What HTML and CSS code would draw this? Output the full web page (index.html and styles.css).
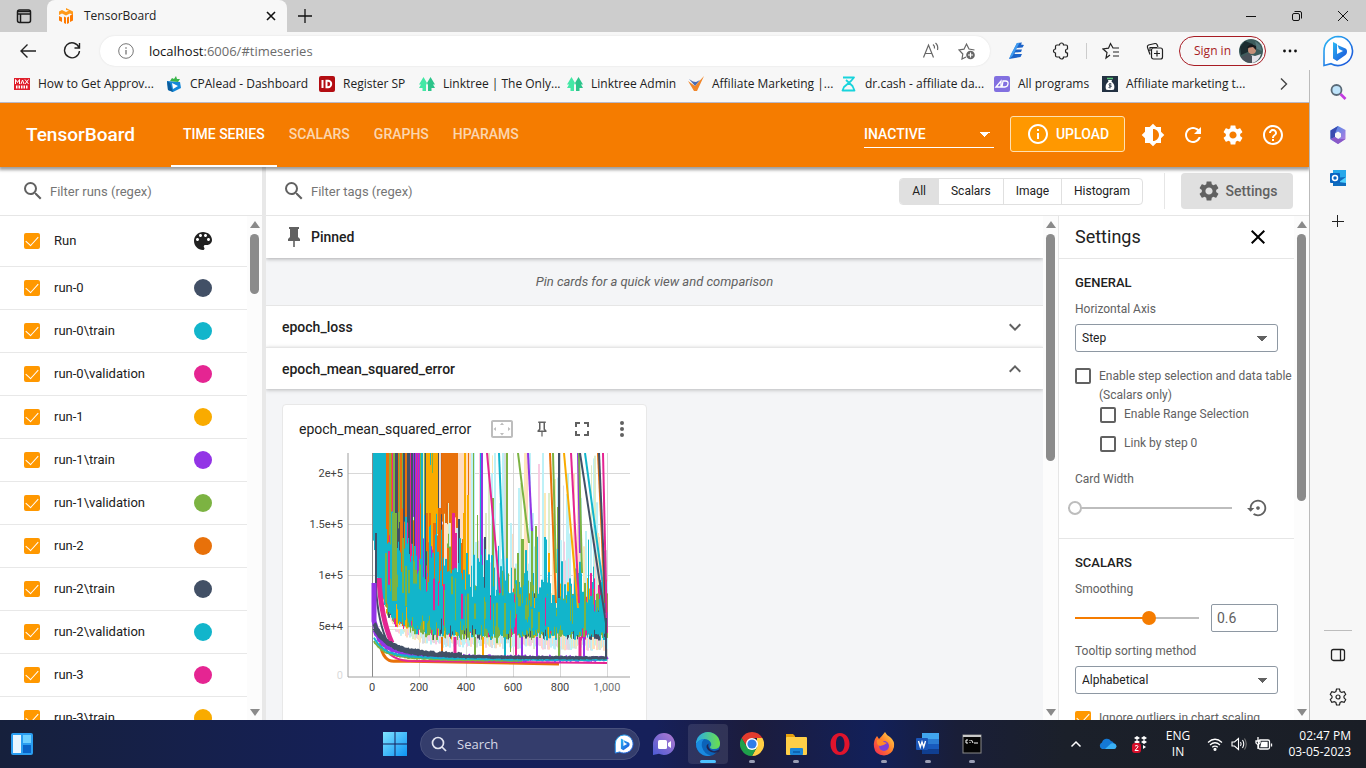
FILE: index.html
```html
<!DOCTYPE html>
<html lang="en">
<head>
<meta charset="utf-8">
<title>TensorBoard</title>
<link rel="stylesheet" href="styles.css">
</head>
<body>
<svg class="defs" aria-hidden="true">
  <defs>
    <linearGradient id="g-bing" x1="0" y1="0" x2="1" y2="1"><stop offset="0" stop-color="#2bb8f5"/><stop offset="1" stop-color="#1b4fd8"/></linearGradient>
    <linearGradient id="g-win" x1="0" y1="0" x2="1" y2="1"><stop offset="0" stop-color="#7fe3ff"/><stop offset="1" stop-color="#0c93f5"/></linearGradient>
    <linearGradient id="g-chat" x1="0" y1="1" x2="1" y2="0"><stop offset="0" stop-color="#4c5bd4"/><stop offset="1" stop-color="#b37ad0"/></linearGradient>
    <linearGradient id="g-edge" x1="0" y1="0" x2="1" y2="0"><stop offset="0" stop-color="#2aa9e8"/><stop offset="1" stop-color="#6be04a"/></linearGradient>
    <linearGradient id="g-fox" x1="1" y1="0" x2="0" y2="1"><stop offset="0" stop-color="#ffe14d"/><stop offset=".5" stop-color="#ff7a2a"/><stop offset="1" stop-color="#f0205a"/></linearGradient>
    <linearGradient id="g-365" x1="0" y1="0" x2="1" y2="1"><stop offset="0" stop-color="#3a8fe8"/><stop offset="1" stop-color="#c07ae0"/></linearGradient>
    <symbol id="i-search" viewBox="0 0 24 24"><path d="M15.5 14h-.79l-.28-.27A6.471 6.471 0 0016 9.5 6.5 6.5 0 109.5 16c1.61 0 3.09-.59 4.23-1.57l.27.28v.79l5 4.99L20.49 19l-4.99-5zm-6 0C7.01 14 5 11.99 5 9.5S7.01 5 9.5 5 14 7.01 14 9.5 11.99 14 9.5 14z"/></symbol>
    <symbol id="i-gear" viewBox="0 0 24 24"><path d="M19.14 12.94c.04-.3.06-.61.06-.94 0-.32-.02-.64-.07-.94l2.03-1.58c.18-.14.23-.41.12-.61l-1.92-3.32c-.12-.22-.37-.29-.59-.22l-2.39.96c-.5-.38-1.03-.7-1.62-.94l-.36-2.54c-.04-.24-.24-.41-.48-.41h-3.84c-.24 0-.43.17-.47.41l-.36 2.54c-.59.24-1.13.57-1.62.94l-2.39-.96c-.22-.08-.47 0-.59.22L2.74 8.87c-.12.21-.08.47.12.61l2.03 1.58c-.05.3-.09.63-.09.94s.02.64.07.94l-2.03 1.58c-.18.14-.23.41-.12.61l1.92 3.32c.12.22.37.29.59.22l2.39-.96c.5.38 1.03.7 1.62.94l.36 2.54c.05.24.24.41.48.41h3.84c.24 0 .44-.17.47-.41l.36-2.54c.59-.24 1.13-.56 1.62-.94l2.39.96c.22.08.47 0 .59-.22l1.92-3.32c.12-.22.07-.47-.12-.61l-2.01-1.58zM12 15.6c-1.98 0-3.6-1.62-3.6-3.6s1.62-3.6 3.6-3.6 3.6 1.62 3.6 3.6-1.62 3.6-3.6 3.6z"/></symbol>
    <symbol id="i-pin" viewBox="0 0 24 24"><path d="M16 12V4h1V2H7v2h1v8l-2 2v2h5.2v6h1.6v-6H18v-2z"/></symbol>
    <symbol id="i-close" viewBox="0 0 24 24"><path d="M19 6.41L17.59 5 12 10.59 6.41 5 5 6.41 10.59 12 5 17.59 6.41 19 12 13.41 17.59 19 19 17.59 13.41 12z"/></symbol>
    <symbol id="i-tree" viewBox="0 0 16 16"><path fill="#43e8a5" d="M4.500 1L0 8.500h2L0 12h3.500v3H7V9l1-2z"/><path fill="#2cc48a" d="M11.500 1L16 8.500h-2l2 3.500h-3.500v3H9V9L8 7z"/></symbol>
    <symbol id="i-bing" viewBox="0 0 32 32"><path d="M16 1.5A14.5 14.5 0 1 1 9 28.7L2 30.5V16A14.5 14.5 0 0 1 16 1.5z" fill="#fff" stroke="url(#g-bing)" stroke-width="1.6"/><path d="M11 7l4 2v10l6-3-4-2-1.5-4 8 3.500c2 1 2 5 0 6.500L15 26l-4-2.500z" fill="url(#g-bing)"/></symbol>
  </defs>
</svg>

<header class="tabstrip">
  <button class="tab-actions" aria-label="Tab actions"><svg width="16" height="16" viewBox="0 0 16 16" fill="none" stroke="#1b1b1b" stroke-width="1.500"><rect x="1.500" y="2" width="13" height="12.500" rx="2"/><path d="M1.500 3.500h13M4.500 6.500v8M1.500 6h13"/></svg></button>
  <div class="tab">
    <svg width="16" height="16" viewBox="0 0 16 16"><path fill="#ff9a1a" d="M8 0l7 3.500V7l-3-1.500L8 7.500 4 5.500 1 7V3.500L4 2l4 2 3-1.500L8 2z"/><path fill="#ff7a00" d="M1 8l3 1.500V14l-3-1.500zM6 8.500l2 1V16l-2-1zM9 9.500l2-1V15l-2 1zM12 7.500L15 6v6.500L12 14z"/></svg>
    <span class="tab-title">TensorBoard</span>
    <button class="tab-close" aria-label="Close tab"><svg width="12" height="12" viewBox="0 0 12 12" stroke="#111" stroke-width="1.600"><path d="M2 2l8 8M10 2l-8 8"/></svg></button>
  </div>
  <button class="new-tab" aria-label="New tab"><svg width="16" height="16" viewBox="0 0 16 16" stroke="#111" stroke-width="1.300"><path d="M8 1v14M1 8h14"/></svg></button>
  <div class="window-buttons">
    <button aria-label="Minimize"><svg width="12" height="12" viewBox="0 0 12 12" stroke="#111"><path d="M1 6.500h10"/></svg></button>
    <button aria-label="Restore"><svg width="12" height="12" viewBox="0 0 12 12" stroke="#111" fill="none"><rect x="1.500" y="3.500" width="7" height="7" rx="1.500"/><path d="M3.500 1.500H9a1.500 1.500 0 0 1 1.500 1.500v5.500"/></svg></button>
    <button aria-label="Close"><svg width="12" height="12" viewBox="0 0 12 12" stroke="#111"><path d="M1 1l10 10M11 1L1 11"/></svg></button>
  </div>
</header>

<div class="toolbar">
  <button class="nav-btn" aria-label="Back"><svg width="18" height="18" viewBox="0 0 18 18" fill="none" stroke="#222" stroke-width="1.400"><path d="M17 9H2M8.500 2.500L2 9l6.500 6.500"/></svg></button>
  <button class="nav-btn" aria-label="Refresh"><svg width="18" height="18" viewBox="0 0 18 18" fill="none" stroke="#222" stroke-width="1.400"><path d="M16 5.500A7.500 7.500 0 1 0 16.500 9M16.500 1v5h-5"/></svg></button>
  <div class="address">
    <svg width="16" height="16" viewBox="0 0 16 16" fill="none" stroke="#767676"><circle cx="8" cy="8" r="7.300"/><path d="M8 7v4.500M8 4.300v1.400" stroke-width="1.300"/></svg>
    <a class="url" href="#timeseries">localhost<span>:6006/#timeseries</span></a>
    <button aria-label="Read aloud"><svg width="18" height="18" viewBox="0 0 18 18" fill="none" stroke="#666" stroke-width="1.200"><path d="M1.500 15.500L6.500 3l5 12.500M3.300 11.500h6.400M11 2.500q2 1.500 1.500 4M13.500 1q3 2.500 2 7"/></svg></button>
    <button aria-label="Add to favorites"><svg width="18" height="18" viewBox="0 0 18 18" fill="none" stroke="#666" stroke-width="1.200"><path d="M8 15l-4 2 .8-5L1 8l5-.8L8.500 2 11 7l5.500 1"/><circle cx="12.500" cy="13" r="4.300" fill="#666" stroke="none"/><path d="M12.500 10.500v5M10 13h5" stroke="#fff"/></svg></button>
  </div>
  <div class="tools">
    <button aria-label="Extension"><svg width="18" height="18" viewBox="0 0 18 18"><path fill="#1c63c8" d="M9 1l5-.500-1 2 3 .500-1.500 2.500-6 .500-.500 1.500h6L13 10l-6 .500-.500 1.500h7.500l-1.500 3L1 17l1.500-3z"/><path fill="#3f9bf0" d="M9 1l2.500 0-7 13-3.500 3 2-5z"/></svg></button>
    <button aria-label="Extensions"><svg width="18" height="18" viewBox="0 0 18 18" fill="none" stroke="#222" stroke-width="1.200"><path d="M5 3h2.500a2 2 0 0 1 4 0H14q1.500 0 1.500 1.500V7a2 2 0 0 0 0 4v2.500q0 1.500-1.500 1.500h-2.500a2 2 0 0 1-4 0H5q-1.500 0-1.500-1.500V11a2 2 0 1 1 0-4V4.500Q3.500 3 5 3z"/></svg></button>
    <span class="tool-sep"></span>
    <button aria-label="Favorites"><svg width="18" height="18" viewBox="0 0 18 18" fill="none" stroke="#222" stroke-width="1.200"><path d="M8 13l-4 3 1-5.500L1 7l5.500-.800L8.500 1.500 11 6h6M11 10h6M11 14h6"/></svg></button>
    <button aria-label="Collections"><svg width="18" height="18" viewBox="0 0 18 18" fill="none" stroke="#222" stroke-width="1.200"><path d="M4 12.500L1.500 5.500a2 2 0 0 1 1-2.500L9 1.500a2 2 0 0 1 2 1L12 5M4 9V5.500h7"/><rect x="5.500" y="6" width="11" height="11" rx="2"/><path d="M11 8.500v6M8 11.500h6"/></svg></button>
    <button class="signin">Sign in
      <svg width="24" height="24" viewBox="0 0 24 24"><circle cx="12" cy="12" r="12" fill="#3d5c5c"/><path d="M1 8l5-6 5 2 3 1-3 7-9 4z" fill="#1b2c30"/><path d="M16 2l5 4 2 6-5-2z" fill="#56787c"/><circle cx="13" cy="11" r="4" fill="#c58f78"/><path d="M8 9q3-6 9-2l0 4-3-3z" fill="#17181c"/><path d="M12 16l4 1 6-2a12 12 0 0 1-9 9z" fill="#e6e3ea"/><path d="M2 18l8-4 3 3 0 7A12 12 0 0 1 2 18z" fill="#4a525a"/></svg>
    </button>
    <button aria-label="More"><svg width="18" height="18" viewBox="0 0 18 18" fill="#111"><circle cx="3.500" cy="9" r="1.400"/><circle cx="9" cy="9" r="1.400"/><circle cx="14.500" cy="9" r="1.400"/></svg></button>
  </div>
  <button class="bing" aria-label="Bing chat"><svg width="32" height="32"><use href="#i-bing"/></svg></button>
</div>

<div class="browser">
  <div class="page-column">
    <nav class="bookmarks" aria-label="Bookmarks">
      <a href="#"><svg width="16" height="16" viewBox="0 0 16 16"><rect y="2" width="16" height="12" fill="#e0202c"/><path d="M1.500 8V3.500l2 3 2-3V8M7 8l1.500-4L10 8M11 3.500L14.500 8M14.500 3.500L11 8" fill="none" stroke="#fff"/><path d="M2 11h12" stroke="#fff" stroke-width="3" stroke-dasharray="1.500 1"/></svg>How to Get Approv...</a>
      <a href="#"><svg width="16" height="16" viewBox="0 0 16 16"><path fill="#1488d8" d="M1 5l13 1 1 6-8 4-5-2z"/><path fill="#fff" d="M6 7l6 3-5 3z"/><path fill="#3ab54a" d="M4 5l2-3 2 1 2-3 1 3 3 0-2 3z"/><path fill="#0a5c9c" d="M1 5l3 2 3 9-5-2z"/></svg>CPAlead - Dashboard</a>
      <a href="#"><svg width="16" height="16" viewBox="0 0 16 16"><rect width="16" height="16" rx="2" fill="#b30d12"/><path d="M3.500 4v8M7.500 4.800H9a3.200 3.200 0 0 1 0 6.400H7.500z" fill="none" stroke="#fff" stroke-width="2"/></svg>Register SP</a>
      <a href="#"><svg width="16" height="16"><use href="#i-tree"/></svg>Linktree | The Only...</a>
      <a href="#"><svg width="16" height="16"><use href="#i-tree"/></svg>Linktree Admin</a>
      <a href="#"><svg width="16" height="16" viewBox="0 0 16 16"><path fill="#f0862a" d="M0 5l7 5 9-10-7 15H6z"/><path fill="#4b6cb4" d="M1 3l4 2.500L8 6l4-2-5 6z"/></svg>Affiliate Marketing |...</a>
      <a href="#"><svg width="16" height="16" viewBox="0 0 16 16" fill="none" stroke="#18d4dc" stroke-width="1.800" stroke-linejoin="round"><path d="M2 1.500h11L10 5l-7 6-1.500 3.500h12L11.500 10 5 4"/></svg>dr.cash - affiliate da...</a>
      <a href="#"><svg width="16" height="16" viewBox="0 0 16 16"><rect width="16" height="16" rx="2" fill="#8270e0"/><path d="M2 11l5-6v6zM9 5h2.500q3 0 2.500 3t-3 3H8z" fill="none" stroke="#fff" stroke-width="1.300"/></svg>All programs</a>
      <a href="#"><svg width="16" height="16" viewBox="0 0 16 16"><rect width="16" height="16" fill="#233142"/><path fill="#fff" d="M6 4h4L9.500 5.500q4 3 2.500 8-4 1-8 0-1.500-5 2.500-8z"/><path d="M5 2.500h6" stroke="#5ac878" stroke-width="1.500"/><path d="M9.500 8Q7 7 7 8.500t2 1.500-2.500 1.500M8 7v5.500" fill="none" stroke="#233142" stroke-width=".8"/></svg>Affiliate marketing t...</a>
      <button aria-label="More bookmarks"><svg width="12" height="14" viewBox="0 0 12 14" fill="none" stroke="#444" stroke-width="1.400"><path d="M3 1.500L8.500 7 3 12.500"/></svg></button>
    </nav>

    <div class="app">
      <header class="app-bar">
        <h1>TensorBoard</h1>
        <nav class="app-tabs">
          <a class="active" href="#timeseries">TIME SERIES</a>
          <a href="#scalars">SCALARS</a>
          <a href="#graphs">GRAPHS</a>
          <a href="#hparams">HPARAMS</a>
        </nav>
        <div class="app-actions">
          <select class="inactive" aria-label="Inactive dashboards"><option>INACTIVE</option></select>
          <button class="upload"><svg width="24" height="24" viewBox="0 0 24 24"><path d="M11 17h2v-6h-2v6zm1-15C6.480 2 2 6.480 2 12s4.480 10 10 10 10-4.480 10-10S17.520 2 12 2zm0 18c-4.410 0-8-3.590-8-8s3.590-8 8-8 8 3.590 8 8-3.590 8-8 8zM11 9h2V7h-2v2z"/></svg>UPLOAD</button>
          <button class="bar-icon" aria-label="Theme"><svg width="24" height="24" viewBox="0 0 24 24"><path d="M20 15.310L23.310 12 20 8.690V4h-4.690L12 .69 8.690 4H4v4.690L.69 12 4 15.310V20h4.690L12 23.310 15.310 20H20v-4.690zM12 18V6c3.310 0 6 2.690 6 6s-2.690 6-6 6z"/></svg></button>
          <button class="bar-icon" aria-label="Reload"><svg width="24" height="24" viewBox="0 0 24 24"><path d="M17.650 6.350C16.200 4.900 14.210 4 12 4c-4.420 0-7.990 3.580-7.990 8s3.570 8 7.990 8c3.730 0 6.840-2.550 7.730-6h-2.080c-.82 2.330-3.040 4-5.650 4-3.310 0-6-2.690-6-6s2.690-6 6-6c1.660 0 3.140.69 4.220 1.780L13 11h7V4l-2.350 2.350z"/></svg></button>
          <button class="bar-icon" aria-label="Settings"><svg width="24" height="24"><use href="#i-gear"/></svg></button>
          <button class="bar-icon" aria-label="Help"><svg width="24" height="24" viewBox="0 0 24 24"><path d="M11 18h2v-2h-2v2zm1-16C6.480 2 2 6.480 2 12s4.480 10 10 10 10-4.480 10-10S17.520 2 12 2zm0 18c-4.410 0-8-3.590-8-8s3.590-8 8-8 8 3.590 8 8-3.590 8-8 8zm0-14c-2.210 0-4 1.790-4 4h2c0-1.100.9-2 2-2s2 .9 2 2c0 2-3 1.750-3 5h2c0-2.250 3-2.500 3-5 0-2.210-1.790-4-4-4z"/></svg></button>
        </div>
      </header>

      <div class="app-body">
        <aside class="runs">
          <label class="filter"><svg width="24" height="24"><use href="#i-search"/></svg><input type="text" placeholder="Filter runs (regex)"></label>
          <div class="scroller">
            <ul class="run-list">
              <li class="run-head"><label><input type="checkbox" checked>Run</label><button aria-label="Color runs"><svg width="24" height="24" viewBox="0 0 24 24" fill="#212121"><path d="M12 3c-4.970 0-9 4.030-9 9s4.030 9 9 9c.83 0 1.500-.67 1.500-1.500 0-.39-.15-.74-.39-1.010-.23-.26-.38-.61-.38-.99 0-.83.67-1.500 1.500-1.500H16c2.760 0 5-2.240 5-5 0-4.420-4.030-8-9-8zm-5.500 9c-.83 0-1.500-.67-1.500-1.500S5.670 9 6.500 9 8 9.670 8 10.500 7.330 12 6.500 12zm3-4C8.670 8 8 7.330 8 6.500S8.670 5 9.500 5s1.500.67 1.500 1.500S10.330 8 9.500 8zm5 0c-.83 0-1.500-.67-1.500-1.500S13.670 5 14.500 5s1.500.67 1.500 1.500S15.330 8 14.500 8zm3 4c-.83 0-1.500-.67-1.500-1.500S16.670 9 17.500 9s1.500.67 1.500 1.500-.67 1.500-1.500 1.500z"/></svg></button></li>
              <li><label><input type="checkbox" checked>run-0</label><span class="swatch navy"></span></li>
              <li><label><input type="checkbox" checked>run-0\train</label><span class="swatch teal"></span></li>
              <li><label><input type="checkbox" checked>run-0\validation</label><span class="swatch pink"></span></li>
              <li><label><input type="checkbox" checked>run-1</label><span class="swatch amber"></span></li>
              <li><label><input type="checkbox" checked>run-1\train</label><span class="swatch purple"></span></li>
              <li><label><input type="checkbox" checked>run-1\validation</label><span class="swatch green"></span></li>
              <li><label><input type="checkbox" checked>run-2</label><span class="swatch orange"></span></li>
              <li><label><input type="checkbox" checked>run-2\train</label><span class="swatch navy"></span></li>
              <li><label><input type="checkbox" checked>run-2\validation</label><span class="swatch teal"></span></li>
              <li><label><input type="checkbox" checked>run-3</label><span class="swatch pink"></span></li>
              <li><label><input type="checkbox" checked>run-3\train</label><span class="swatch amber"></span></li>
            </ul>
            <div class="scrollbar"><i class="up"></i><i class="thumb thumb-s"></i><i class="down"></i></div>
          </div>
        </aside>

        <main class="main">
          <div class="main-bar">
            <label class="filter"><svg width="24" height="24"><use href="#i-search"/></svg><input type="text" placeholder="Filter tags (regex)"></label>
            <div class="toggle">
              <button class="on">All</button><button>Scalars</button><button>Image</button><button>Histogram</button>
            </div>
            <span class="bar-sep"></span>
            <button class="settings-btn"><svg width="24" height="24"><use href="#i-gear"/></svg>Settings</button>
          </div>
          <div class="main-split">
            <div class="cards scroller">
              <div class="cards-body">
                <h2 class="pinned"><svg width="24" height="24"><use href="#i-pin"/></svg>Pinned</h2>
                <p class="pinned-empty">Pin cards for a quick view and comparison</p>
                <button class="group">epoch_loss<svg width="24" height="24" viewBox="0 0 24 24"><path d="M16.590 8.590L12 13.170 7.410 8.590 6 10l6 6 6-6z"/></svg></button>
                <button class="group open">epoch_mean_squared_error<svg width="24" height="24" viewBox="0 0 24 24"><path d="M12 8l-6 6 1.410 1.410L12 10.830l4.590 4.580L18 14z"/></svg></button>
                <section class="card">
                  <div class="card-head">
                    <h3>epoch_mean_squared_error</h3>
                    <button aria-label="Fit domain" disabled><svg width="24" height="24" viewBox="0 0 24 24"><path d="M12.010 5.500L10 8h4l-1.990-2.500zM18 10v4l2.500-1.990L18 10zM6 10l-2.500 2.010L6 14v-4zm8 6h-4l2.010 2.500L14 16zm7-13H3c-1.100 0-2 .9-2 2v14c0 1.100.9 2 2 2h18c1.100 0 2-.9 2-2V5c0-1.100-.9-2-2-2zm0 16.010H3V4.990h18v14.020z"/></svg></button>
                    <button aria-label="Pin card"><svg width="18" height="18" viewBox="0 0 24 24"><path d="M16 12V4h1V2H7v2h1v8l-2 2v2h5.200v6h1.600v-6H18v-2zM8.800 14l1.200-1.200V4h4v8.800l1.200 1.200z"/></svg></button>
                    <button aria-label="Full screen"><svg width="24" height="24" viewBox="0 0 24 24"><path d="M7 14H5v5h5v-2H7v-3zm-2-4h2V7h3V5H5v5zm12 7h-3v2h5v-5h-2v3zM14 5v2h3v3h2V5h-5z"/></svg></button>
                    <button aria-label="More options"><svg width="24" height="24" viewBox="0 0 24 24"><circle cx="12" cy="6" r="2"/><circle cx="12" cy="12" r="2"/><circle cx="12" cy="18" r="2"/></svg></button>
                  </div>
                  <svg class="chart" width="363" height="252" viewBox="0 0 363 252" role="img" aria-label="epoch_mean_squared_error by step"></svg>
                </section>
              </div>
              <div class="scrollbar"><i class="up"></i><i class="thumb thumb-m"></i><i class="down"></i></div>
            </div>

            <aside class="settings scroller">
              <div class="settings-body">
                <div class="settings-head"><h2>Settings</h2><button aria-label="Close settings"><svg width="24" height="24"><use href="#i-close"/></svg></button></div>
                <section>
                  <h3>GENERAL</h3>
                  <label class="field" for="axis">Horizontal Axis</label>
                  <select id="axis"><option>Step</option></select>
                  <label class="check check-step"><input type="checkbox"><span>Enable step selection and data table (Scalars only)</span></label>
                  <label class="check check-sub"><input type="checkbox"><span>Enable Range Selection</span></label>
                  <label class="check check-sub check-link"><input type="checkbox"><span>Link by step 0</span></label>
                  <label class="field" for="width">Card Width</label>
                  <div class="slider-row wide"><input id="width" class="hollow" type="range" min="0" max="100" value="0"><button aria-label="Reset width"><svg width="22" height="22" viewBox="0 0 24 24"><path d="M14 12c0-1.100-.9-2-2-2s-2 .9-2 2 .9 2 2 2 2-.9 2-2zm-2-9c-4.970 0-9 4.030-9 9H0l4 4 4-4H5c0-3.870 3.130-7 7-7s7 3.130 7 7-3.130 7-7 7c-1.510 0-2.910-.49-4.060-1.300l-1.420 1.440C8.040 20.300 9.940 21 12 21c4.970 0 9-4.030 9-9s-4.030-9-9-9z"/></svg></button></div>
                </section>
                <section>
                  <h3>SCALARS</h3>
                  <label class="field" for="smooth">Smoothing</label>
                  <div class="slider-row"><input id="smooth" class="filled" type="range" min="0" max="1" step="0.01" value="0.61"><input class="number" type="text" value="0.6" aria-label="Smoothing value"></div>
                  <label class="field" for="sort">Tooltip sorting method</label>
                  <select id="sort"><option>Alphabetical</option></select>
                  <label class="check check-outliers"><input type="checkbox" checked><span>Ignore outliers in chart scaling</span></label>
                </section>
              </div>
              <div class="scrollbar"><i class="up"></i><i class="thumb thumb-l"></i><i class="down"></i></div>
            </aside>
          </div>
        </main>
      </div>
    </div>
  </div>

  <aside class="edge-bar">
    <button aria-label="Search"><svg width="18" height="18" viewBox="0 0 18 18"><circle cx="7.500" cy="7" r="5" fill="#bfe4fb" stroke="#5a6a78" stroke-width="1.800"/><path d="M11.500 11l5 5" stroke="#c23be0" stroke-width="2.600"/></svg></button>
    <button aria-label="Microsoft 365"><svg width="18" height="18" viewBox="0 0 18 18"><path fill="url(#g-365)" fill-rule="evenodd" d="M9 0l7.500 4v9L9 18l-7.500-4.500V4.500zM9 5.500L6 7.500v3.500l3 2 3-2V7.500z"/><path fill="#3a4bb0" d="M1.500 4.500L9 0 6 7.500v3.500L1.500 13z"/><path fill="#8a5ac8" d="M1.500 13L6 11l3 2 7.500 0L9 18z"/></svg></button>
    <button aria-label="Outlook"><svg width="18" height="18" viewBox="0 0 18 18"><rect x="4" y="1" width="13" height="10" fill="#28a8ea"/><path fill="#0f6cbd" d="M4 9l13-1v9H4z"/><path fill="#50d0ff" d="M10 13l7-5v6z"/><rect x="1" y="4" width="10" height="10" rx="1" fill="#0a64c0"/><circle cx="6" cy="9" r="2.500" fill="none" stroke="#fff" stroke-width="1.500"/></svg></button>
    <button aria-label="Add"><svg width="18" height="18" viewBox="0 0 18 18" stroke="#222"><path d="M8.500 3v12M3 9.500h12"/></svg></button>
    <div class="edge-bottom">
      <button aria-label="Sidebar"><svg width="18" height="18" viewBox="0 0 18 18" fill="none" stroke="#222" stroke-width="1.300"><rect x="2.500" y="3.500" width="13" height="11" rx="2"/><path d="M11.500 3.500v11"/></svg></button>
      <button aria-label="Sidebar settings"><svg width="18" height="18" viewBox="0 0 18 18" fill="none" stroke="#222" stroke-width="1.200"><path d="M7.500 1h3l.6 2.500 1.600.9 2.500-.7 1.500 2.600L15 8.200v1.600l1.700 1.900-1.500 2.600-2.500-.7-1.600.9-.6 2.500h-3l-.6-2.500-1.600-.9-2.500.7-1.500-2.600L3 9.800V8.200L1.300 6.300l1.500-2.600 2.500.7 1.600-.9z"/><circle cx="9" cy="9" r="2"/></svg></button>
    </div>
  </aside>
</div>

<footer class="taskbar">
  <button class="widgets" aria-label="Widgets"><svg width="24" height="24" viewBox="0 0 24 24"><rect x="1" y="1" width="22" height="22" rx="2" fill="#2a9df0"/><rect x="3" y="3" width="8" height="18" fill="#e9f6ff"/><rect x="13" y="3" width="8" height="8" fill="#6fd0ff"/><rect x="13" y="13" width="8" height="8" fill="#0a64c8"/></svg></button>
  <div class="apps">
    <button aria-label="Start"><svg width="24" height="24" viewBox="0 0 24 24" fill="url(#g-win)"><path d="M0 0h11.500v11.500H0zM12.500 0H24v11.500H12.500zM0 12.500h11.500V24H0zM12.500 12.500H24V24H12.500z"/></svg></button>
    <label class="task-search"><svg width="16" height="16" viewBox="0 0 16 16" fill="none" stroke="#e2e4f0" stroke-width="1.700"><circle cx="7" cy="7" r="5.500"/><path d="M11 11l4 4"/></svg><input type="text" placeholder="Search"><svg width="20" height="20"><use href="#i-bing"/></svg></label>
    <button aria-label="Chat"><svg width="24" height="24" viewBox="0 0 24 24"><path d="M12 1a11 11 0 1 1-5 20.800L1 23V12A11 11 0 0 1 12 1z" fill="url(#g-chat)"/><rect x="6" y="8" width="9" height="9" rx="1.500" fill="#fff"/><path d="M16 11l3-2v7l-3-2z" fill="#fff"/></svg></button>
    <button class="current" aria-label="Edge"><svg width="24" height="24" viewBox="0 0 24 24"><circle cx="12" cy="12" r="12" fill="#0c63b8"/><path fill="url(#g-edge)" d="M0 12A12 12 0 0 1 24 12q0 5-6 5-4 0-4-2 2-2 1-4-2-4-7-4-5 1-8 5z"/><path fill="#1a8ae0" d="M0 12q3-5 8-5-3 3-2 8 2 7 9 8.600A12 12 0 0 1 0 12z"/><path fill="#1f2554" d="M14 11q-3 1-1 5 3 5 9 2l2 -1-1 3q-7 2-11-2-4-5 2-7z"/></svg></button>
    <button class="open" aria-label="Chrome"><svg width="24" height="24" viewBox="0 0 24 24"><path fill="#e33b2e" d="M12 0a12 12 0 0 1 10.400 6H12L7 15 1.600 6A12 12 0 0 1 12 0z"/><path fill="#ffce44" d="M22.400 6A12 12 0 0 1 12 24l5-9V6z"/><path fill="#1fa04b" d="M1.600 6A12 12 0 0 0 12 24l5-9H7z"/><circle cx="12" cy="12" r="6" fill="#fff"/><circle cx="12" cy="12" r="4.600" fill="#2f7de8"/></svg></button>
    <button class="open" aria-label="File Explorer"><svg width="24" height="24" viewBox="0 0 24 24"><path fill="#e5a00d" d="M2 2h7l2 2v5H2z"/><rect x="2" y="5" width="21" height="18" rx="1" fill="#ffcf48"/><rect x="6" y="16" width="13" height="7" rx="1" fill="#1b86d8"/><path d="M9 20h7" stroke="#0a5aa8" stroke-width="1.500"/></svg></button>
    <button aria-label="Opera"><svg width="24" height="24" viewBox="0 0 24 24"><path fill-rule="evenodd" fill="#e0142c" d="M12 1c6 0 9.500 5 9.500 11S18 23 12 23 2.500 18 2.500 12 6 1 12 1zm0 3C9 4 8 8 8 12s1 8 4 8 4.500-4 4.500-8S15 4 12 4z"/></svg></button>
    <button class="open" aria-label="Firefox"><svg width="24" height="24" viewBox="0 0 24 24"><path fill="url(#g-fox)" d="M13 0q2 4 5 5 5 4 4 10-2 8-10 8.500Q3 23 2 15q-1-6 3-11l2 3q3-3 6-7z"/><circle cx="12" cy="14" r="5" fill="#7a3fd8"/><path fill="#ff8a2a" d="M5 8q5-1 7 2l3 1q-4 3-7 3-4-1-3-6z"/></svg></button>
    <button class="open" aria-label="Word"><svg width="24" height="24" viewBox="0 0 24 24"><path fill="#41a5ee" d="M6 1h17v6H6z"/><path fill="#2b7cd3" d="M6 7h17v5H6z"/><path fill="#185abd" d="M6 12h17v5H6z"/><path fill="#103f91" d="M6 17h17v5H6z"/><rect x="0" y="6" width="12" height="12" rx="1" fill="#1a55b8"/><path d="M2.500 9l1.800 6L6 10l1.700 5 1.800-6" fill="none" stroke="#fff" stroke-width="1.400"/></svg></button>
    <button class="open" aria-label="Command Prompt"><svg width="24" height="24" viewBox="0 0 24 24"><rect x="3" y="3" width="18" height="18" fill="#050505" stroke="#8a8a8a"/><rect x="3" y="3" width="18" height="2" fill="#c8c8c8"/><path d="M8 8H6v3h2M10 8v1M10 10v1M11.500 8l1.500 3M14 11h4" fill="none" stroke="#fff"/></svg></button>
  </div>
  <div class="tray">
    <button class="chev" aria-label="Hidden icons"><svg width="12" height="12" viewBox="0 0 12 12" fill="none" stroke="#fff" stroke-width="1.500"><path d="M1.500 8.500L6 4l4.500 4.500"/></svg></button>
    <button class="cloud" aria-label="OneDrive"><svg width="18" height="18" viewBox="0 0 18 18"><path fill="#1478d4" d="M3 14a3.500 3.500 0 0 1 0-6.500A5 5 0 0 1 12 6q2 0 3 2.500A3 3 0 0 1 15 14z"/><path fill="#3ab0f5" d="M6 14l6-5.500q5-1 5.500 3Q17 14 15 14z"/></svg></button>
    <button class="dropbox" aria-label="Dropbox"><svg width="18" height="18" viewBox="0 0 18 18"><path fill="#fff" d="M6 1l3 2-3 2-3-2zM13 1l3 2-3 2-3-2zM6 5l3 2-3 2-3-2zM13 5l3 2-3 2-3-2zM12 10l3 2-3 2z"/><rect x="1" y="8" width="9" height="10" rx="3" fill="#d8102c"/><path d="M4 11q3-1.500 3 .800L4 15.500h3.500" fill="none" stroke="#fff"/></svg></button>
    <div class="lang"><span>ENG</span><span>IN</span></div>
    <button class="status" aria-label="Network, volume, battery">
      <svg width="16" height="16" viewBox="0 0 16 16" fill="none" stroke="#fff" stroke-width="1.200"><path d="M1 6.500q7-6.500 14 0M3 9q5-4.500 10 0M5.200 11.300q2.800-2.500 5.600 0"/><circle cx="8" cy="13.300" r="1" fill="#fff"/></svg>
      <svg width="16" height="16" viewBox="0 0 16 16" fill="none" stroke="#fff" stroke-width="1.100"><path d="M1 6h2.500L7.500 2.500v11L3.500 10H1zM9.500 6q1.300 2 0 4M11.500 4q2.500 4 0 8"/><path d="M13.500 2.500q3.500 5.500 0 11" stroke="#777"/></svg>
      <svg width="18" height="16" viewBox="0 0 18 16" fill="none" stroke="#fff" stroke-width="1.300"><rect x="3.500" y="4" width="11" height="9" rx="1.500"/><path d="M7 6.500h5v4H6z" fill="#fff"/><path d="M16.500 7.500v3M3 1v4M1 5h4v2q-2 3-4 0zM3 8v5"/></svg>
    </button>
    <div class="clock"><span>02:47 PM</span><span>03-05-2023</span></div>
  </div>
</footer>
<script src="chart.js"></script>
</body>
</html>
```
FILE: styles.css
```css
* { box-sizing: border-box; }
body {
  margin: 0;
  height: 100vh;
  display: flex;
  flex-direction: column;
  overflow: hidden;
  background: #f7f7f7;
  color: #212121;
  font: 13px/18px Roboto, "Liberation Sans", sans-serif;
}
.defs { position: absolute; width: 0; height: 0; }
svg { display: block; flex: none; }
button {
  display: flex;
  align-items: center;
  justify-content: center;
  padding: 0;
  border: 0;
  background: none;
  color: inherit;
  font: inherit;
}
h1, h2, h3, p, ul { margin: 0; padding: 0; }
a { color: inherit; text-decoration: none; }
input, select { font: inherit; color: inherit; margin: 0; }

/* Browser frame */
.tabstrip, .toolbar, .bookmarks, .taskbar { font-family: "Open Sans", "Noto Sans", sans-serif; line-height: 16px; }
.tabstrip { display: flex; flex: none; height: 32px; background: #cdcdcd; font-size: 12px; }
.tab-actions { width: 47px; }
.tab {
  display: flex;
  align-items: center;
  gap: 10px;
  width: 240px;
  padding: 0 10px 0 11px;
  border-radius: 8px 8px 0 0;
  background: #f7f7f7;
}
.tab-title { flex: 1; }
.new-tab { width: 36px; }
.window-buttons { display: flex; margin-left: auto; }
.window-buttons button { width: 46px; }

.toolbar { display: flex; flex: none; align-items: center; height: 38px; padding-left: 6px; background: #f7f7f7; }
.nav-btn { width: 44px; height: 30px; }
.address {
  display: flex;
  flex: 1;
  align-items: center;
  height: 30px;
  margin-left: 6px;
  padding: 0 14px 0 18px;
  border-radius: 15px;
  background: #fff;
  box-shadow: 0 0 2px #ddd;
  gap: 18px;
}
.url { flex: 1; margin-left: -3px; font-size: 13px; color: #111; }
.url span { color: #6b6b6b; }
.tools { display: flex; align-items: center; padding-left: 18px; gap: 26px; }
.tool-sep { width: 1px; height: 16px; margin: 0 -11px 0 -10px; background: #ccc; }
.signin {
  width: 87px;
  height: 30px;
  gap: 8px;
  margin: 0 -11px;
  padding-left: 12px;
  border: 1px solid #a81c24;
  border-radius: 15px;
  color: #a81c24;
  font-size: 12px;
}
.bing { width: 56px; margin-left: 11px; }

.browser { display: flex; flex: 1; min-height: 0; }
.page-column { display: flex; flex: 1; flex-direction: column; min-width: 0; }
.bookmarks {
  display: grid;
  grid-template-columns: 152px 153px 100px 148px 121px 153px 153px 108px 1fr 50px;
  align-items: center;
  flex: none;
  height: 32px;
  padding: 0 0 4px 14px;
  font-size: 12px;
  white-space: nowrap;
}
.bookmarks a { display: flex; align-items: center; gap: 8px; }

.edge-bar {
  display: flex;
  flex: none;
  flex-direction: column;
  align-items: center;
  width: 57px;
  padding: 13px 0 14px;
  gap: 25px;
  border-left: 1px solid #bbb;
}
.edge-bottom {
  display: flex;
  flex-direction: column;
  align-items: center;
  gap: 24px;
  width: 28px;
  margin-top: auto;
  padding-top: 15px;
  border-top: 1px solid #bdbdbd;
}

/* TensorBoard */
.app { display: flex; flex: 1; flex-direction: column; min-height: 0; overflow: hidden; border-top: 1px solid #b9b9c8; background: #fff; }
.app-bar {
  display: flex;
  flex: none;
  align-items: center;
  height: 64px;
  padding: 0 24px 0 26px;
  background: #f57c00;
  color: #fff;
  box-shadow: 0 2px 3px 1px rgba(0, 0, 0, .38);
  z-index: 1;
}
.app-bar h1 { width: 145px; font-size: 19px; font-weight: 500; }
.app-tabs { display: flex; align-self: stretch; font-size: 14px; font-weight: 500; }
.app-tabs a {
  display: flex;
  align-items: center;
  padding: 0 12px;
  border-bottom: 2px solid transparent;
  color: rgba(255, 255, 255, .7);
}
.app-tabs .active { color: #fff; border-color: #fff; }
.app-actions { display: flex; align-items: center; margin-left: auto; gap: 16px; font-size: 14px; font-weight: 500; }
.app-actions svg { fill: #fff; }
.inactive {
  appearance: none;
  width: 130px;
  height: 28px;
  padding: 0;
  border: 0;
  border-bottom: 1px solid #fff;
  border-radius: 0;
  margin-bottom: 2px;
  background: conic-gradient(from -45deg at 50% 100%, #fff 90deg, transparent 0) 116px 12px / 10px 5px no-repeat;
}
.upload { width: 115px; height: 36px; gap: 6px; margin-bottom: 2px; border: 1px solid #ffe0b2; border-radius: 3px; background: #ff9800; }
.bar-icon { width: 24px; height: 24px; }
.inactive, .settings-body select { background-repeat: no-repeat; }

.app-body { display: flex; flex: 1; min-height: 0; }
.filter { display: flex; flex: 1; align-items: center; gap: 5px; }
.filter svg { fill: #616161; }
.filter input { width: 100%; min-width: 0; padding: 1px 0 0; border: 0; background: none; outline: 0; }
.filter input::placeholder { color: #757575; opacity: 1; }

.scroller { display: flex; min-height: 0; overflow: hidden; }
.scrollbar { position: relative; flex: none; width: 15px; background: #fcfcfc; }
.scrollbar i { position: absolute; left: 3px; width: 9px; }
.scrollbar .up { top: 5px; border: 5px solid transparent; border-top: 0; border-bottom: 7px solid #8a8a8a; width: 0; }
.scrollbar .down { bottom: 4px; border: 5px solid transparent; border-bottom: 0; border-top: 7px solid #8a8a8a; width: 0; }
.scrollbar .thumb { top: 18px; border-radius: 5px; background: #8b8b8b; }
.thumb-s { height: 60px; }
.thumb-m { height: 227px; }
.thumb-l { height: 267px; }

.runs { display: flex; flex: none; flex-direction: column; width: 266px; border-right: 4px solid #e8e8e8; }
.runs .filter { flex: none; height: 49px; padding-left: 21px; border-bottom: 1px solid #e6e6e6; }
.runs .scroller { flex: 1; }
.run-list { flex: 1; list-style: none; }
.run-list li {
  display: flex;
  align-items: center;
  justify-content: space-between;
  height: 43px;
  padding: 0 35px 0 24px;
  border-bottom: 1px solid #e8e8e8;
}
.run-list .run-head { height: 51px; padding-right: 32px; }
.run-list label { display: flex; align-items: center; gap: 14px; line-height: 20px; }
.swatch { width: 18px; height: 18px; border-radius: 50%; }
.navy { background: #425066; }
.teal { background: #12b5cb; }
.pink { background: #e52592; }
.amber { background: #f9ab00; }
.purple { background: #9334e6; }
.green { background: #7cb342; }
.orange { background: #e8710a; }

input[type="checkbox"] {
  appearance: none;
  display: grid;
  place-items: center;
  flex: none;
  width: 16px;
  height: 16px;
  border: 2px solid #616161;
  border-radius: 2px;
  background: #fff;
}
input[type="checkbox"]:checked { border-color: #ff9800; background: #ff9800; }
input[type="checkbox"]:checked::after {
  content: "";
  width: 11px;
  height: 6px;
  border: solid #fff;
  border-width: 0 0 1px 1px;
  transform: translateY(-2px) rotate(-48deg);
}

.main { display: flex; flex: 1; flex-direction: column; min-width: 0; }
.main-bar { display: flex; flex: none; align-items: center; height: 49px; padding: 0 16px; border-bottom: 1px solid #e6e6e6; }
.toggle { display: flex; height: 27px; border: 1px solid #e0e0e0; border-radius: 4px; overflow: hidden; font-size: 12px; }
.toggle button { padding: 0 12px; border-left: 1px solid #e0e0e0; }
.toggle .on { border-left: 0; background: #e0e0e0; }
.bar-sep { width: 1px; height: 36px; margin: 0 16px 0 21px; background: #e6e6e6; }
.settings-btn { width: 112px; height: 36px; gap: 5px; border-radius: 4px; background: #e0e0e0; color: #616161; font-size: 14px; font-weight: 500; }
.settings-btn svg { fill: #616161; }

.main-split { display: flex; flex: 1; min-height: 0; }
.cards { flex: 1; }
.cards-body { flex: 1; min-width: 0; background: #f4f5f7; }
.pinned {
  display: flex;
  align-items: center;
  gap: 5px;
  height: 42px;
  margin-bottom: 1px;
  padding-left: 16px;
  background: #fff;
  font-size: 14px;
  font-weight: 500;
  box-shadow: 0 1px 4px rgba(0, 0, 0, .3);
}
.pinned svg { fill: #616161; }
.pinned-empty { height: 46px; padding-top: 14px; color: #616161; font-style: italic; text-align: center; }
.group {
  justify-content: space-between;
  width: 100%;
  height: 42px;
  padding: 0 16px;
  border-top: 1px solid #e6e6e6;
  background: #fff;
  font-size: 14px;
  font-weight: 500;
}
.group svg { fill: #616161; }
.group.open { box-shadow: 0 1px 4px rgba(0, 0, 0, .25); }
.card { width: 365px; height: 360px; margin: 15px 16px; border: 1px solid #e8e8e8; border-radius: 4px; background: #fff; }
.card-head { display: flex; align-items: center; height: 48px; padding: 0 4px 0 16px; }
.card-head h3 { flex: 1; font-size: 14px; font-weight: 400; }
.card-head button { width: 40px; height: 40px; }
.card-head svg { fill: #616161; }
.card-head button:disabled svg { fill: #bdbdbd; }
.chart text { font: 11px Roboto, sans-serif; fill: #424242; }

.settings { flex: none; width: 251px; border-left: 1px solid #e6e6e6; }
.settings-body { flex: 1; min-width: 0; color: #616161; font-size: 12px; line-height: 16px; }
.settings-head { display: flex; align-items: center; justify-content: space-between; height: 43px; padding: 0 24px 0 16px; border-bottom: 1px solid #e6e6e6; }
.settings-head h2 { color: #212121; font-size: 18px; font-weight: 400; }
.settings-body section { padding: 16px 16px 20px; border-bottom: 1px solid #e6e6e6; }
.settings-body h3 { color: #212121; font-size: 13px; font-weight: 500; margin-bottom: 10px; }
.field { display: block; margin-bottom: 7px; }
.settings-body select {
  appearance: none;
  display: block;
  width: 203px;
  height: 28px;
  padding: 0 6px;
  border: 1px solid #8e98a3;
  border-radius: 3px;
  color: #212121;
  background: conic-gradient(from -45deg at 50% 100%, #616161 90deg, transparent 0) 181px 11px / 10px 5px no-repeat #fff;
}
.check { display: flex; align-items: flex-start; gap: 8px; line-height: 19px; }
.check-step { margin: 15px -16px 0 0; }
.check-step input { margin-top: 1px; }
.check-sub { align-items: center; margin-left: 25px; }
.check-link { margin: 10px 0 18px 25px; }
.check-outliers { align-items: center; margin-top: 15px; }
.slider-row { display: flex; align-items: center; justify-content: space-between; margin-bottom: 11px; }
.slider-row.wide { height: 28px; padding-right: 9px; margin: 0 0 -4px; }
.slider-row svg { fill: #616161; }
input[type="range"] { appearance: none; width: 124px; height: 14px; background: none; }
.wide input[type="range"] { width: 164px; margin-left: -7px; }
input[type="range"]::-webkit-slider-runnable-track { height: 2px; background: #bdbdbd; }
input[type="range"]::-webkit-slider-thumb { appearance: none; width: 14px; height: 14px; margin-top: -6px; border-radius: 50%; background: #f57c00; }
.hollow::-webkit-slider-thumb { border: 2px solid #bdbdbd; background: #fff !important; }
.filled::-webkit-slider-runnable-track { background: linear-gradient(to right, #f57c00 60%, #bdbdbd 60%) !important; }
.number { width: 67px; height: 28px; padding: 0 5px; border: 1px solid #8e98a3; border-radius: 2px; font-size: 14px; }

/* Taskbar */
.taskbar {
  display: grid;
  grid-template-columns: 375px auto 1fr;
  align-items: center;
  flex: none;
  height: 48px;
  background: linear-gradient(to right, #16203c, #15205a 28%, #16205a 48%, #1c1c3c 55%, #12205a 64%, #191e38 70%, #1b202a 78%, #1a1e26);
  color: #fff;
  font-size: 12px;
}
.widgets { width: 44px; }
.apps { display: flex; align-items: center; gap: 4px; }
.apps button { position: relative; width: 40px; height: 40px; }
.apps .current { border-radius: 4px; background: rgba(255, 255, 255, .1); }
.apps .open::after, .apps .current::after {
  content: "";
  position: absolute;
  bottom: 1px;
  width: 6px;
  height: 3px;
  border-radius: 2px;
  background: #9a9eb4;
}
.apps .current::after { width: 16px; background: #4cc2ff; }
.task-search {
  display: flex;
  align-items: center;
  gap: 10px;
  width: 220px;
  height: 32px;
  margin-left: 1px;
  padding: 0 5px 0 10px;
  border: 1px solid #48507c;
  border-radius: 16px;
  background: #343d6c;
}
.task-search input { flex: 1; min-width: 0; padding: 0; border: 0; background: none; outline: 0; font-size: 13px; }
.task-search input::placeholder { color: #d6d8e6; opacity: 1; }
.tray { display: flex; align-items: center; justify-content: flex-end; padding-right: 15px; }
.tray .chev, .tray .cloud, .tray .dropbox { width: 32px; }
.lang { width: 44px; text-align: center; }
.lang span, .clock span { display: block; }
.status { gap: 8px; width: 68px; margin-left: 6px; }
.clock { width: 77px; text-align: right; white-space: nowrap; }
```
FILE: chart.js
```js
(function () {
  var NS = 'http://www.w3.org/2000/svg';
  var svg = document.querySelector('.chart');
  var teal = '#12b5cb', pink = '#e52592', amber = '#f9ab00', purple = '#9334e6';
  var green = '#7cb342', orange = '#e8710a', navy = '#425066';
  var W = 235, H = 224, LEFT = 89;

  var seed = 77;
  function rnd() {
    seed = (seed * 1664525 + 1013904223) % 4294967296;
    return seed / 4294967296;
  }
  function pick(list) { return list[Math.floor(rnd() * list.length)]; }
  function add(parent, name, attrs, text) {
    var el = document.createElementNS(NS, name);
    for (var k in attrs) el.setAttribute(k, attrs[k]);
    if (text) el.textContent = text;
    parent.appendChild(el);
    return el;
  }
  var plot = add(svg, 'g', { transform: 'translate(' + LEFT + ',0)' });
  function line(x1, y1, x2, y2, color, width) {
    add(plot, 'line', { x1: x1, y1: y1, x2: x2, y2: y2, stroke: color, 'stroke-width': width || 2 });
  }
  function bar(x, top, bottom, color, width) {
    add(plot, 'rect', { x: x, y: Math.max(0, top), width: width || 1, height: Math.max(1, bottom - Math.max(0, top)), fill: color });
  }
  function floorAt(x) {
    if (x < 6) return 80 + x * 10;
    if (x < 20) return 140 + (x - 6) * 2.2;
    if (x < 60) return 171 + (x - 20) * .33;
    return 184.5;
  }

  /* grid */
  [['2e+5', 20], ['1.5e+5', 71], ['1e+5', 122], ['5e+4', 173]].forEach(function (t) {
    line(-24, t[1] + .5, 258, t[1] + .5, '#d8d8d8', 1);
    add(svg, 'text', { x: 60, y: t[1] + 4, 'text-anchor': 'end' }, t[0]);
  });
  ['0', '200', '400', '600', '800', '1,000'].forEach(function (t, i) {
    line(i * 47 + .5, 0, i * 47 + .5, H, '#d8d8d8', 1);
    add(svg, 'text', { x: LEFT + i * 47, y: 238, 'text-anchor': 'middle', opacity: i === 5 ? .75 : 1 }, t);
  });
  line(.5, 0, .5, H, '#8a8a8a', 1);

  /* unsmoothed values, in pale tones */
  var pale = ['#bdf1f7', '#bdf1f7', '#bdf1f7', '#dcedc8', '#ffdcc0', '#f9cbe3', '#fde8b8', '#d9dce4'];
  var x, top, i;
  for (x = 16; x < W; x += 1) {
    top = x < 95 ? 0 : rnd() < .15 ? rnd() * 80 : 80 + rnd() * 75;
    bar(x, top, floorAt(x), pick(pale), rnd() < .5 ? 2 : 1);
    bar(x, 176, floorAt(x) + 2 + x * .02 + rnd() * 7, pick(pale), 2);
  }
  [[99, 0], [101, 0], [107, 0], [113, 60], [116, 0], [119, 20], [122, 0], [127, 50], [130, 0], [132, 0], [134, 40],
   [138, 70], [146, 35], [148, 30], [152, 0], [154, 0], [157, 0], [160, 60], [166, 11], [170, 0], [172, 40], [176, 40],
   [180, 60], [182, 26], [186, 70], [194, 60], [201, 20], [205, 3], [208, 45], [213, 78], [218, 70], [225, 80]]
    .forEach(function (p) { bar(p[0], p[1], 185, pick(pale), 2); });

  /* noisy spikes by training stage */
  function zone(from, to, colors, minTop, maxTop, fullChance, density) {
    for (var x = from; x < to; x += 1) {
      if (rnd() > density) continue;
      bar(x, rnd() < fullChance ? 0 : minTop + rnd() * (maxTop - minTop), floorAt(x) - 6 + rnd() * 5, pick(colors), rnd() < .7 ? 2 : 1);
    }
  }
  function hang(from, to, colors, minBottom, maxBottom, density) {
    for (var x = from; x < to; x += 1) {
      if (rnd() < density) bar(x, 0, minBottom + rnd() * (maxBottom - minBottom), pick(colors), rnd() < .7 ? 2 : 1);
    }
  }
  zone(2, 40, [teal, green, orange, teal, pink], 20, 80, .8, 1);
  zone(38, 62, [teal, green, purple, amber, orange], 10, 90, .7, 1);
  zone(60, 96, [teal, green, orange, amber, pink, orange], 60, 130, .12, 1);
  zone(96, 135, [green, teal, teal, green, pink, teal], 100, 165, .03, .7);
  zone(135, 165, [green, teal, teal, green, orange], 110, 165, 0, .7);
  zone(165, 235, [teal, green, teal, amber, teal, pink], 120, 168, 0, .7);
  hang(14, 20, [orange, orange, green], 60, 120, 1);
  hang(20, 30, [navy, navy, green, pink], 70, 115, 1);
  hang(26, 36, [orange, orange, navy, green], 50, 120, 1);
  hang(36, 40, [navy, navy, pink], 60, 130, 1);
  hang(40, 56, [teal, purple, green, navy, teal, pink], 40, 150, .9);
  hang(54, 66, [amber, amber, amber, orange], 60, 100, 1);
  bar(54, 0, 60, amber, 12);
  bar(58, 0, 12, teal, 1); bar(60, 0, 20, green, 1);
  hang(66, 70, [navy, green, amber], 40, 100, .8);
  hang(69, 86, [orange, orange, orange, orange, '#e0690a'], 45, 80, 1);
  bar(70, 0, 50, orange, 15);
  hang(86, 98, ['#ffdcc0', '#ffdcc0', '#ffdcc0', amber, orange], 60, 150, 1);
  bar(61, 70, 150, orange, 4); bar(66, 55, 135, orange, 3); bar(72, 70, 120, '#fde0c8', 3); bar(80, 60, 130, pink, 3);
  bar(86, 66, 110, navy, 2); bar(91, 60, 128, amber, 2); bar(95, 42, 128, amber, 2);
  bar(75, 95, 150, orange, 2); bar(83, 80, 150, pink, 2); bar(88, 90, 140, orange, 2);
  bar(101, 0, 150, green, 1); bar(109, 0, 120, purple, 2); bar(105, 62, 140, green, 1); bar(112, 84, 140, navy, 2);
  bar(120, 45, 160, green, 2); bar(145, 100, 170, green, 2); bar(163, 73, 170, green, 2); bar(159, 75, 170, green, 2);
  bar(149, 86, 170, green, 3); bar(176, 100, 170, amber, 2); bar(185, 54, 170, green, 2);

  /* dense band */
  for (x = 7; x < W; x += 1) {
    bar(x, 140 + rnd() * 20, floorAt(x) - 5 + rnd() * 8, pick([green, green, green, pink, green, amber, navy, teal]), rnd() < .6 ? 2 : 1);
  }
  for (x = 1; x < W; x += 1) {
    var far = Math.min(1, Math.max(0, (x - 12) / 120));
    var t = x < 12 ? 0 : 90 + far * 48 - Math.pow(rnd(), 4) * 70 + rnd() * 28;
    var b = floorAt(x) - 1 - rnd() * (x < 20 ? 8 : 26 - far * 14);
    bar(x, t, b, teal, rnd() < .8 ? 2 : 1);
  }
  for (i = 0; i < 48; i += 1) {
    x = 12 + rnd() * 215;
    top = 92 + Math.min(35, x * .25) + rnd() * 35;
    bar(Math.floor(x), top, top + 12 + rnd() * 30, pick([green, green, green, green, pink]), rnd() < .4 ? 2 : 1);
  }
  bar(20, 60, 148, green, 5); bar(13, 100, 150, green, 2); bar(30, 85, 140, green, 2);

  /* isolated divergences */
  [[115, 0, 128, 140, pink], [127, 0, 133, 150, teal], [146, 0, 157, 90, green], [156, 0, 160, 78, purple],
   [178, 0, 184, 150, orange], [181, 0, 184, 120, green], [192, 0, 206, 155, amber], [199, 0, 207, 150, pink],
   [206, 0, 208, 100, purple], [207, 0, 210, 120, green], [208, 0, 234, 170, navy], [213, 0, 232, 140, teal],
   [226, 0, 233, 150, orange], [227, 0, 234, 160, navy], [231, 0, 235, 180, pink]]
    .forEach(function (s) { line(s[0], s[1], s[2], s[3], s[4], 2); });
  line(187, 0, 187, 145, navy, 2);
  [[70, orange, 2], [83, pink, 3], [103, green, 2], [111, amber, 2], [133, teal, 2], [150, purple, 2],
   [165, purple, 2], [187, green, 2], [208, pink, 3], [212, purple, 2]]
    .forEach(function (s) { line(s[0], 184, s[0], 206, s[1], s[2]); });

  /* first steps, before the runs settle */
  add(plot, 'path', { d: 'M7 125Q9 165 20 190', fill: 'none', stroke: pink, 'stroke-width': 5 });
  add(plot, 'path', { d: 'M4 80V135Q6 170 16 190', fill: 'none', stroke: navy, 'stroke-width': 2 });
  add(plot, 'path', { d: 'M2 130V168Q5 182 14 192', fill: 'none', stroke: purple, 'stroke-width': 5 });
  bar(0, 140, 168, purple, 2);

  /* converged runs */
  function curve(start, end, decay, color, width, jitter, stop) {
    var d = '';
    for (var x = 2; x <= (stop || W); x += 1) {
      var y = end - (end - start) * .75 * Math.exp(-x / decay) - (end - start) * .25 * Math.exp(-x / 55) + (rnd() - .5) * jitter;
      d += (d ? 'L' : 'M') + x + ' ' + y.toFixed(1);
    }
    add(plot, 'path', { d: d, fill: 'none', stroke: color, 'stroke-width': width });
  }
  add(plot, 'path', { d: 'M8 190Q11 210 24 208L187 211', fill: 'none', stroke: orange, 'stroke-width': 3 });
  add(plot, 'path', { d: 'M12 190Q15 206 36 208L235 210', fill: 'none', stroke: pink, 'stroke-width': 2 });
  curve(172, 206, 10, purple, 4, 2);
  curve(185, 208, 10, green, 2, 1, 150);
  curve(180, 207, 9, teal, 2, 1);
  curve(165, 204, 12, navy, 4, 2, 90);
  curve(172, 205, 14, navy, 3, 1);
  line(234, 165, 234, 206, navy, 2);

  /* axes */
  add(svg, 'text', { x: 60, y: 226, 'text-anchor': 'end', opacity: .2 }, '0');
  line(-24, 0, -24, H, '#9e9e9e', 1);
  line(-24, H, 258, H, '#9e9e9e', 1);
}());
```
